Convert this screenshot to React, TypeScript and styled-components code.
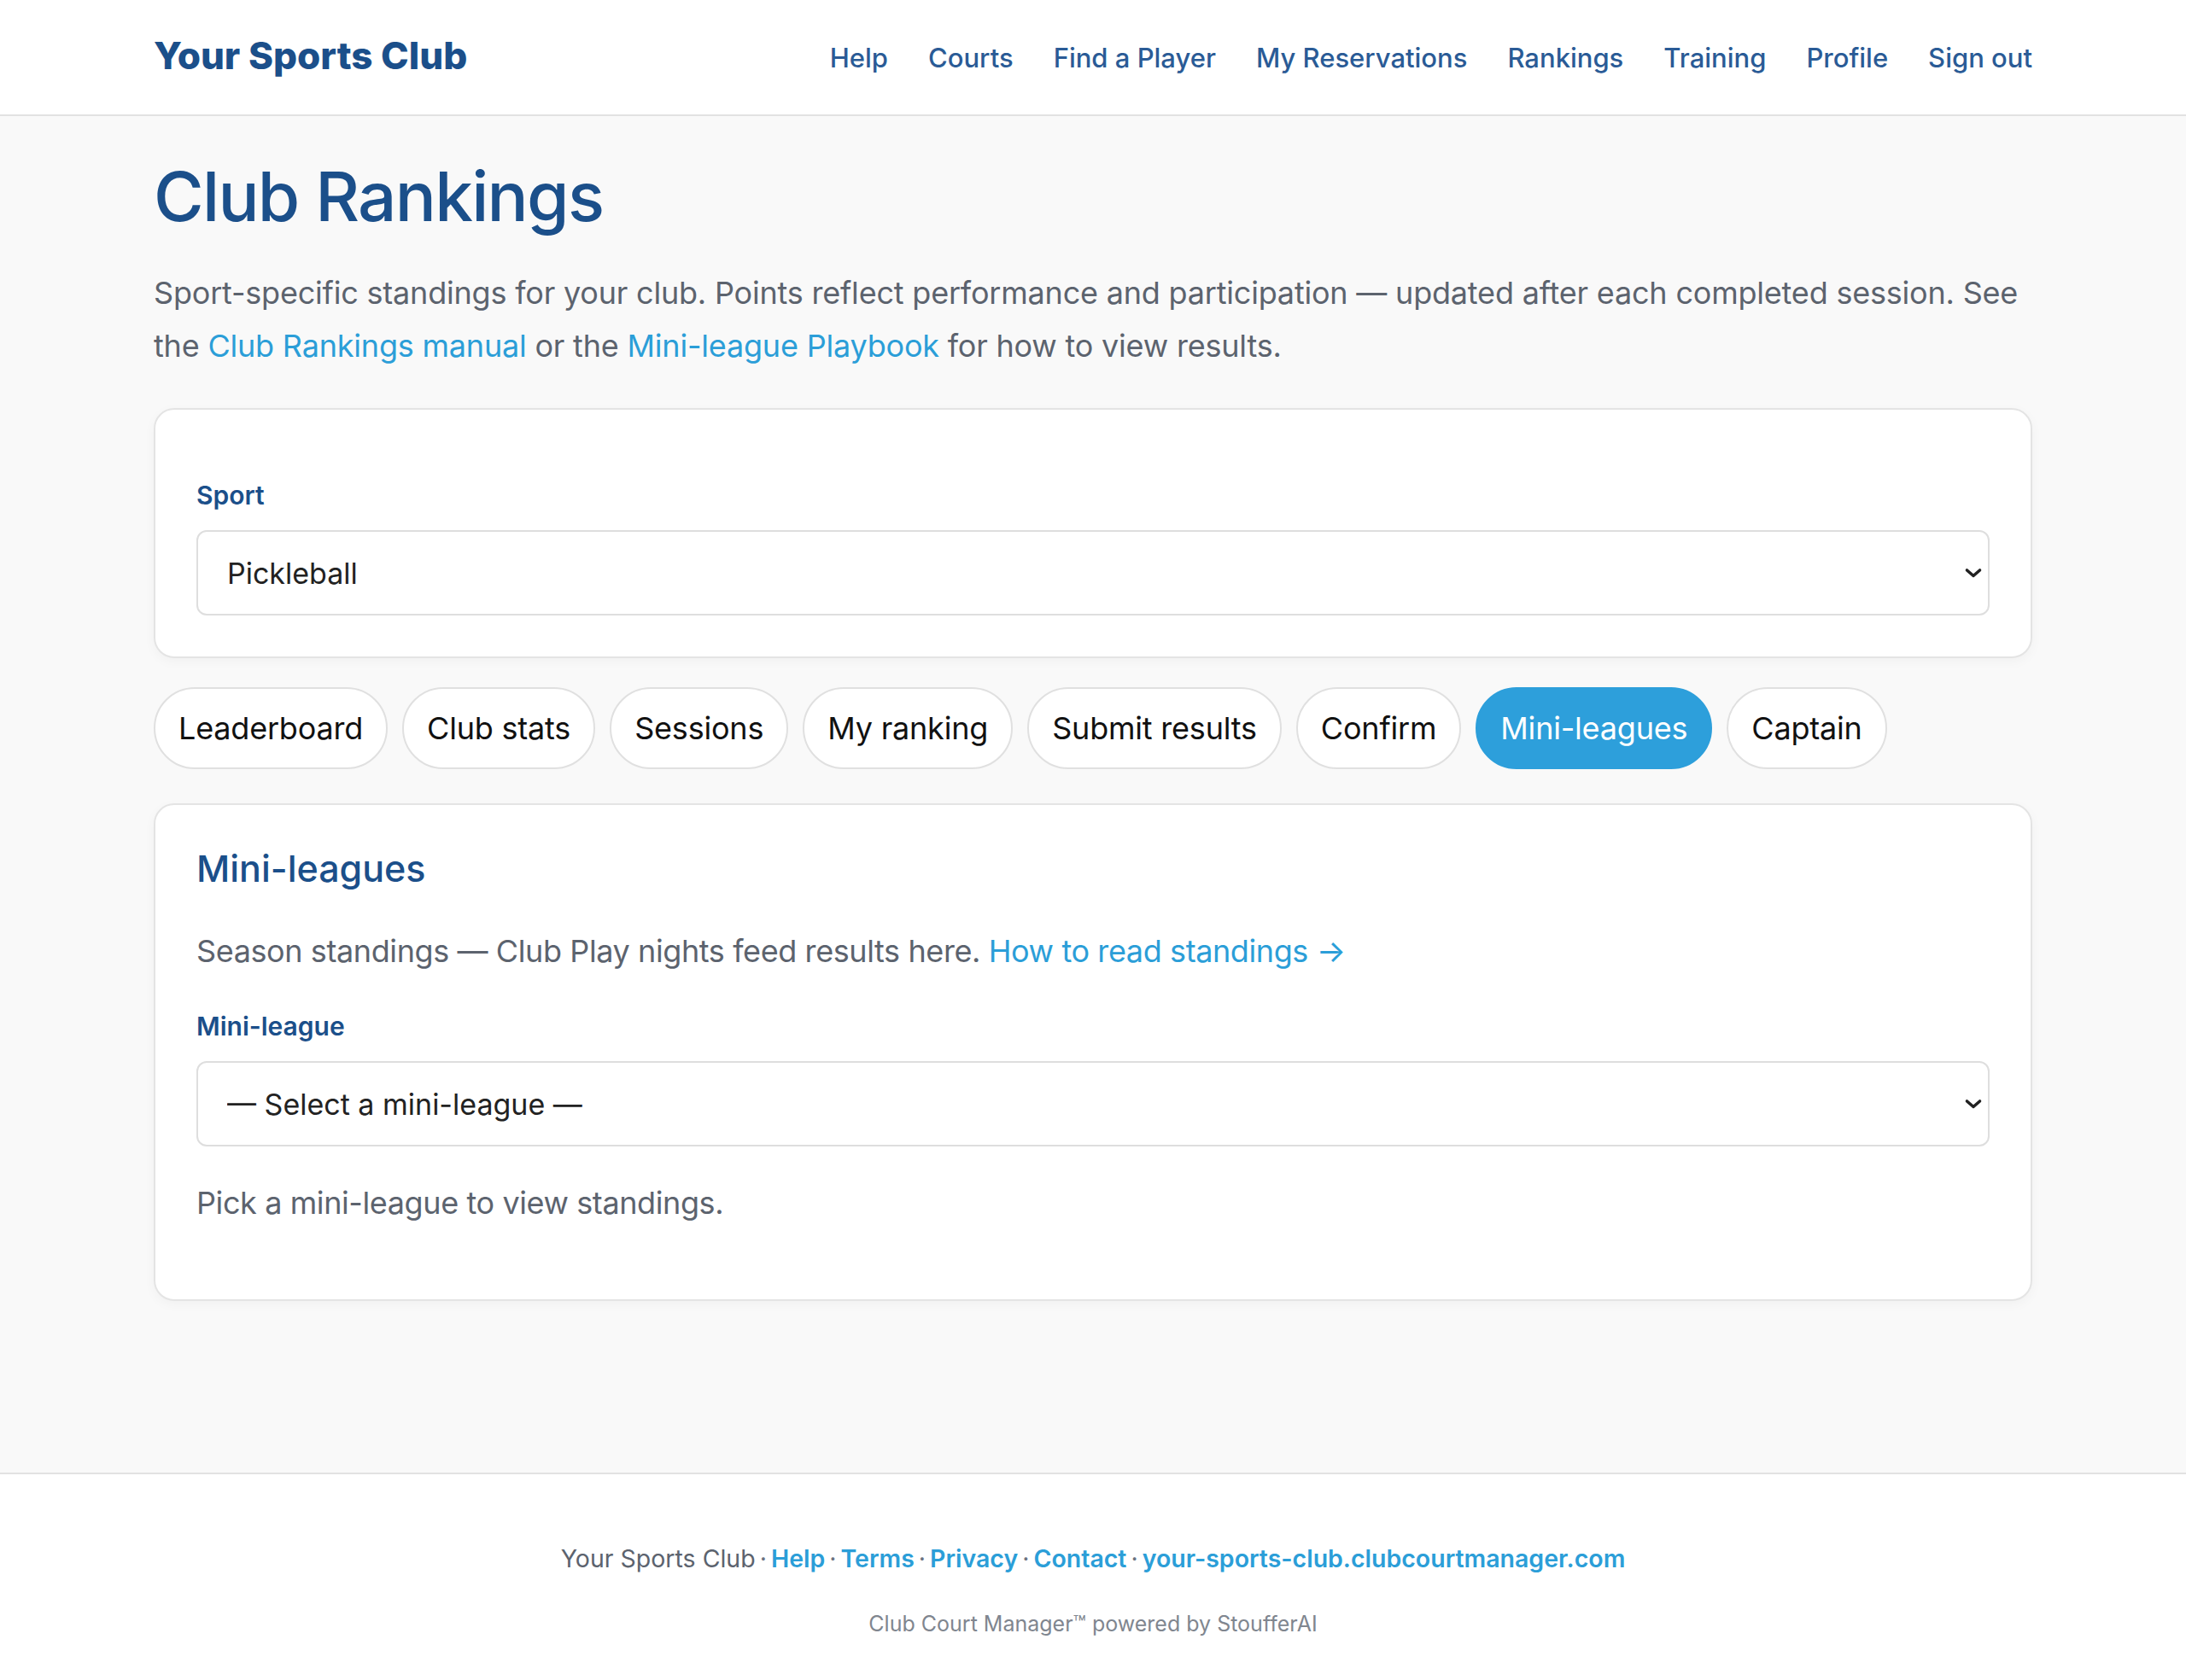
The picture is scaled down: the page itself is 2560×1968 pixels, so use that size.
import styled, { createGlobalStyle } from 'styled-components';

const GlobalStyle = createGlobalStyle`
  html, body {
    margin: 0;
    padding: 0;
    background: #f9f9f9;
    font-family: Inter, "Open Sans", sans-serif;
    color: #222;
  }
  * {
    box-sizing: border-box;
  }
`;

const Page = styled.div`
  display: flex;
  flex-direction: column;
  min-height: 100vh;
`;

const Header = styled.header`
  background: #fff;
  border-bottom: 2px solid #e2e2e2;
`;

const HeaderInner = styled.div`
  max-width: 2200px;
  height: 134px;
  margin: 0 auto;
  display: flex;
  align-items: center;
  justify-content: space-between;
`;

const Logo = styled.a`
  font-size: 44px;
  font-weight: 800;
  color: #1b4f8a;
  text-decoration: none;
  margin-top: -4px;
`;

const Nav = styled.nav`
  display: flex;
  align-items: center;
  gap: 47px;
`;

const NavLink = styled.a`
  font-size: 31px;
  font-weight: 500;
  color: #2a5b96;
  text-decoration: none;
`;

const Main = styled.main`
  flex: 1;
  width: 100%;
  max-width: 2200px;
  margin: 0 auto;
  padding: 46px 0 120px;
`;

const Title = styled.h1`
  margin: 0;
  font-size: 80px;
  line-height: 96px;
  font-weight: 500;
  letter-spacing: -1.7px;
  color: #1b4f8a;
`;

const Lead = styled.p`
  margin: 34px 0 0;
  font-size: 36px;
  line-height: 62px;
  letter-spacing: -0.2px;
  color: #5c636e;
`;

const TextLink = styled.a`
  color: #2b9ed8;
  text-decoration: none;
`;

const Card = styled.section<{ $top?: number; $bottom?: number }>`
  background: #fff;
  border: 2px solid #e4e4e4;
  border-radius: 24px;
  box-shadow: 0 4px 14px rgba(0, 0, 0, 0.035);
  padding: ${({ $top = 48 }) => $top}px 48px ${({ $bottom = 48 }) => $bottom}px;
`;

const FilterCard = styled(Card)`
  margin-top: 42px;
`;

const FieldLabel = styled.label`
  display: block;
  font-size: 30px;
  line-height: 45px;
  font-weight: 600;
  color: #1b4f8a;
`;

const SelectWrap = styled.div`
  position: relative;
  margin-top: 18px;
`;

const Select = styled.select`
  appearance: none;
  -webkit-appearance: none;
  width: 100%;
  height: 100px;
  padding: 0 70px 0 34px;
  border: 2px solid #dedede;
  border-radius: 12px;
  background: #fff;
  font-family: inherit;
  font-size: 34px;
  color: #222;
  outline: none;
`;

const Chevron = styled.svg`
  position: absolute;
  right: 8px;
  top: 50%;
  width: 22px;
  height: 22px;
  transform: translateY(-50%);
  pointer-events: none;
`;

const Tabs = styled.div`
  display: flex;
  gap: 17px;
  margin-top: 34px;
`;

const Tab = styled.button<{ $active?: boolean }>`
  height: 96px;
  padding: 0 27px;
  border-radius: 999px;
  border: 2px solid ${({ $active }) => ($active ? '#2d9fdb' : '#e0e0e0')};
  background: ${({ $active }) => ($active ? '#2d9fdb' : '#fff')};
  color: ${({ $active }) => ($active ? '#fff' : '#111')};
  font-family: inherit;
  font-size: 36px;
  font-weight: 400;
  letter-spacing: -0.2px;
  cursor: pointer;
`;

const PanelCard = styled(Card)`
  margin-top: 40px;
`;

const PanelTitle = styled.h2`
  margin: 0;
  font-size: 43px;
  line-height: 53px;
  font-weight: 500;
  color: #1b4f8a;
`;

const PanelText = styled.p<{ $gap: number }>`
  margin: ${({ $gap }) => $gap}px 0 0;
  font-size: 36px;
  line-height: 62px;
  letter-spacing: -0.4px;
  color: #5c636e;
`;

const LeagueLabel = styled(FieldLabel)`
  margin-top: 35px;
`;

const Footer = styled.footer`
  background: #fff;
  border-top: 2px solid #e2e2e2;
  padding: 75px 0 46px;
  text-align: center;
`;

const FooterLine = styled.div`
  font-size: 28.5px;
  line-height: 48px;
  color: #5c636e;
`;

const FooterLink = styled.a`
  color: #2b9ed8;
  font-weight: 600;
  text-decoration: none;
`;

const Sep = styled.span`
  color: #6b7280;
  margin: 0 5px;
`;

const Powered = styled.div`
  margin-top: 32px;
  font-size: 25px;
  line-height: 40px;
  color: #80868f;
`;

const navItems = ['Help', 'Courts', 'Find a Player', 'My Reservations', 'Rankings', 'Training', 'Profile', 'Sign out'];
const tabs = ['Leaderboard', 'Club stats', 'Sessions', 'My ranking', 'Submit results', 'Confirm', 'Mini-leagues', 'Captain'];
const footerLinks = ['Help', 'Terms', 'Privacy', 'Contact', 'your-sports-club.clubcourtmanager.com'];

const DownChevron = () => (
  <Chevron viewBox="0 0 22 22">
    <path d="M3.5 8 L11 14.5 L18.5 8" fill="none" stroke="#222" strokeWidth="3.6" strokeLinecap="round" strokeLinejoin="round" />
  </Chevron>
);

export default function App() {
  return (
    <Page>
      <GlobalStyle />
      <Header>
        <HeaderInner>
          <Logo href="#">Your Sports Club</Logo>
          <Nav>
            {navItems.map(item => (
              <NavLink key={item} href="#">{item}</NavLink>
            ))}
          </Nav>
        </HeaderInner>
      </Header>

      <Main>
        <Title>Club Rankings</Title>
        <Lead>
          Sport-specific standings for your club. Points reflect performance and participation — updated after each
          completed session. See the <TextLink href="#">Club Rankings manual</TextLink> or the{' '}
          <TextLink href="#">Mini-league Playbook</TextLink> for how to view results.
        </Lead>

        <FilterCard $top={78}>
          <FieldLabel>Sport</FieldLabel>
          <SelectWrap>
            <Select defaultValue="pickleball">
              <option value="pickleball">Pickleball</option>
              <option value="tennis">Tennis</option>
              <option value="padel">Padel</option>
            </Select>
            <DownChevron />
          </SelectWrap>
        </FilterCard>

        <Tabs>
          {tabs.map(tab => (
            <Tab key={tab} $active={tab === 'Mini-leagues'}>{tab}</Tab>
          ))}
        </Tabs>

        <PanelCard $bottom={82}>
          <PanelTitle>Mini-leagues</PanelTitle>
          <PanelText $gap={39}>
            Season standings — Club Play nights feed results here. <TextLink href="#">How to read standings →</TextLink>
          </PanelText>
          <LeagueLabel>Mini-league</LeagueLabel>
          <SelectWrap>
            <Select defaultValue="">
              <option value="">— Select a mini-league —</option>
            </Select>
            <DownChevron />
          </SelectWrap>
          <PanelText $gap={35}>Pick a mini-league to view standings.</PanelText>
        </PanelCard>
      </Main>

      <Footer>
        <FooterLine>
          Your Sports Club
          {footerLinks.map(link => (
            <span key={link}>
              <Sep>·</Sep>
              <FooterLink href="#">{link}</FooterLink>
            </span>
          ))}
        </FooterLine>
        <Powered>Club Court Manager™ powered by StoufferAI</Powered>
      </Footer>
    </Page>
  );
}
